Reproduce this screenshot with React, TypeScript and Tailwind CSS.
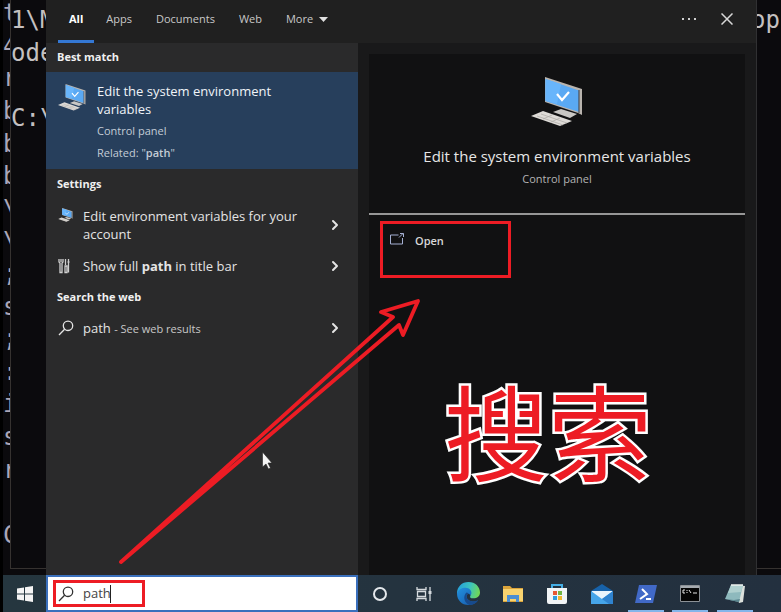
import React from "react";
import { ChevronRight } from "lucide-react";

const ink = "#ed1c24";

function ComputerIcon({ className }: { className: string }) {
  return (
    <svg viewBox="0 0 52 50" className={className} aria-hidden="true">
      <path d="M14 0 51 12V38L47 36 14 25Z" fill="#b9b4ae" />
      <path d="M14.500 2 48 13.500V35L14.500 24Z" fill="#5aa9f3" />
      <path d="M14.500 2 30 7 26 27 14.500 24Z" fill="#68b5fb" />
      <path d="M48 13v23" stroke="#4a4c50" strokeWidth="1.200" />
      <path d="m26 17 5 6 7-8" fill="none" stroke="#fff" strokeWidth="2.200" />
      <path d="m22 35 8-3 16 5-7 4Z" fill="#c9c7c4" />
      <path d="m0 39 12-5 29 10-12 5Z" fill="#dedbd7" />
      <path d="m6 39 26 9M10 37l26 9M12 42l9-4m-1 7 9-4" stroke="#aaa7a3" strokeWidth=".7" />
    </svg>
  );
}

function SearchIcon({ className }: { className: string }) {
  return (
    <svg viewBox="0 0 16 16" className={className} fill="none" stroke="currentColor" strokeWidth="1.300" aria-hidden="true">
      <circle cx="10" cy="5.800" r="4.700" />
      <path d="M6.600 9.200 1 15" />
    </svg>
  );
}

function ToolsIcon() {
  return (
    <svg viewBox="0 0 12 16" className="h-4 w-3" fill="none" stroke="#d0d0d0" strokeWidth="1.300" aria-hidden="true">
      <path d="M1 1v3l1 1v9.500h2V5l1-1V1M3 1v3M7.500 1v6M7 8h2v6.500H7ZM10.500 1v3M9.500 4h2M10.500 4v10.500" />
    </svg>
  );
}

function Heading({ children, className }: { children: React.ReactNode; className: string }) {
  return <h2 className={`flex items-center pl-[11px] text-[11px] font-bold text-[#f0f0f0] ${className}`}>{children}</h2>;
}

function ResultRow({ icon, children, className }: { icon: React.ReactNode; children: React.ReactNode; className: string }) {
  return (
    <button className={`flex w-full items-center pr-[15px] pl-3 text-left text-[13px] leading-[18px] text-[#e4e4e4] ${className}`}>
      <span className="flex w-[25px] shrink-0 self-start pt-2">{icon}</span>
      <span className="flex-1">{children}</span>
      <ChevronRight className="size-4 shrink-0" strokeWidth={3} />
    </button>
  );
}

const tabs = ["Apps", "Documents", "Web"];
const backLines = ["t", "4", "r", "b", "b", "b", "\\", "\\", ";", "s", ";", ":", "i", "s", "r", "", "C"];

function Header() {
  return (
    <header className="flex h-[43px] items-stretch bg-[#202020] pl-3 text-[11px] text-[#c8c8c8]">
      <nav className="flex flex-1">
        <button className="border-b-[3px] border-[#3478d4] px-[11px] pb-px font-bold text-white">All</button>
        {tabs.map((tab) => (
          <button key={tab} className="px-3 pb-1">{tab}</button>
        ))}
        <button className="flex items-center gap-1.5 px-3 pb-1">
          More
          <svg viewBox="0 0 9 5" className="h-[5px] w-[9px]" aria-hidden="true"><path d="M0 0h9L4.500 5Z" fill="#e0e0e0" /></svg>
        </button>
      </nav>
      <button aria-label="Options" className="w-9 pb-1.5">
        <svg viewBox="0 0 14 2" className="mx-auto h-0.5 w-3.5" fill="#d0d0d0" aria-hidden="true">
          <path d="M0 0h2v2H0zM6 0h2v2H6zM12 0h2v2h-2z" />
        </svg>
      </button>
      <button aria-label="Close" className="mr-[9px] w-10 pb-1.5">
        <svg viewBox="0 0 12 12" className="mx-auto size-3" stroke="#d8d8d8" strokeWidth="1.500" aria-hidden="true">
          <path d="m.5.5 11 11m0-11-11 11" />
        </svg>
      </button>
    </header>
  );
}

function Results() {
  return (
    <section className="w-[312px] shrink-0 bg-[#2a2a2b]">
      <Heading className="h-[29px]">Best match</Heading>
      <button className="flex h-[97px] w-full bg-[#273f5c] pt-2.5 pl-3 text-left">
        <ComputerIcon className="mt-0.5 h-[27px] w-7 shrink-0" />
        <span className="ml-[11px] block text-[11px] leading-[22px] text-[#c3ccd6]">
          <span className="mb-0.5 block max-w-[200px] text-[13px] leading-[18px] text-[#f0f4f8]">Edit the system environment variables</span>
          <span className="block">Control panel</span>
          <span className="block">Related: "<b className="font-semibold">path</b>"</span>
        </span>
      </button>
      <Heading className="h-[31px]">Settings</Heading>
      <ResultRow className="h-[50px]" icon={<ComputerIcon className="h-[14px] w-[15px]" />}>
        Edit environment variables for your account
      </ResultRow>
      <ResultRow className="h-8" icon={<ToolsIcon />}>
        Show full <b className="font-bold">path</b> in title bar
      </ResultRow>
      <Heading className="h-[30px]">Search the web</Heading>
      <ResultRow className="h-8" icon={<SearchIcon className="size-4" />}>
        path <span className="text-[11px] text-[#c8c8c8]">- See web results</span>
      </ResultRow>
    </section>
  );
}

function Preview() {
  return (
    <section className="flex flex-1 flex-col bg-[#19191a] px-[11px] pt-[11px]">
      <div className="flex-1 bg-[#111112]">
        <div className="flex h-[161px] flex-col items-center border-b-2 border-[#969696] pt-[23px]">
          <ComputerIcon className="h-[50px] w-[52px]" />
          <h1 className="mt-[17px] text-[15px] leading-6 text-[#e6e6e6]">Edit the system environment variables</h1>
          <p className="text-[11px] leading-[22px] text-[#b4b4b4]">Control panel</p>
        </div>
        <div className="relative mt-1.5 ml-[11px] h-[57px] w-[131px]">
          <button className="flex h-10 w-full items-center gap-[11px] pl-2.5 text-[11px] font-semibold text-[#d8d8d8]">
            <svg viewBox="0 0 14 12" className="mb-1 h-3 w-3.5" fill="none" stroke="#a5b0d2" aria-hidden="true">
              <path d="M8.500 2H.5v9h12V5M9 4.500 13 .5M10 .5h3.500V4" />
            </svg>
            Open
          </button>
          <span className="pointer-events-none absolute inset-0 border-[3px] border-[#ed1c24]" />
        </div>
        <p className="mt-[86px] ml-[75px] text-[104px] leading-[130px] font-normal whitespace-nowrap text-[#ed1c24] [font-family:'Noto_Sans_CJK_SC',sans-serif] [-webkit-text-stroke:5px_white] [paint-order:stroke_fill]">
          搜索
        </p>
      </div>
    </section>
  );
}

function EdgeIcon() {
  return (
    <svg viewBox="0 0 24 24" className="size-[23px]" aria-hidden="true">
      <defs>
        <linearGradient id="edgeTop" x1="0" y1=".3" x2="1" y2=".5"><stop stopColor="#249fdc" /><stop offset=".55" stopColor="#3cc3bd" /><stop offset="1" stopColor="#72d654" /></linearGradient>
        <linearGradient id="edgeLow" x1="0" y1="0" x2="1" y2="1"><stop stopColor="#2291df" /><stop offset="1" stopColor="#1757a8" /></linearGradient>
      </defs>
      <path d="M0 12C0 5 5 0 12 0s12 5 12 11c0 4-3 6-7 6-3 0-4-1-3-3 2-4-1-6-4-6-4 0-8 3-10 4Z" fill="url(#edgeTop)" />
      <path d="M0 12C1 8 5 6 9 6c4 0 6 3 6 5 0 1 0 2-1 3-1-2-4-2-4 1 0 4 6 7 12 4-2 3-6 5-10 5C5 24 0 19 0 12Z" fill="url(#edgeLow)" />
      <path d="M10 11c-4 3-3 11 3 13 4 0 7-2 9-5-6 3-12 0-12-4 0-2 1-3 3-2-1-1-2-2-3-2Z" fill="#174a8d" />
    </svg>
  );
}

const apps: { name: string; open?: boolean; icon: React.ReactNode }[] = [
  { name: "Cortana", icon: <svg viewBox="0 0 16 16" className="size-4"><circle cx="8" cy="8" r="6" fill="none" stroke="#e4e8ec" strokeWidth="2" /></svg> },
  { name: "Task View", icon: <svg viewBox="0 0 16 16" className="size-4" fill="none" stroke="#d5dade" strokeWidth="1.300"><path d="M1 1v2.500h9V1M1.500 5.500h8v5h-8ZM1 15v-2.500h9V15M14 1v14" /><path d="M12.500 5h3v3h-3z" fill="#d5dade" stroke="none" /></svg> },
  { name: "Edge", icon: <EdgeIcon /> },
  { name: "File Explorer", icon: <svg viewBox="0 0 20 17" className="h-[17px] w-5"><path d="M0 1h7l2 2h11v14H0z" fill="#dba43b" /><path d="M0 4h20v12H0z" fill="#f8d36f" /><path d="M4 17v-7h12v7h-3v-3H7v3z" fill="#4b8ed3" /></svg> },
  { name: "Store", icon: <svg viewBox="0 0 22 22" className="size-[22px]"><path d="M6 6V2h10v4" fill="none" stroke="#45aee5" strokeWidth="2" /><path d="M1 5h20v14q0 2-2 2H3q-2 0-2-2z" fill="#f1f4f6" /><path d="M7 8h4v4H7z" fill="#e65732" /><path d="M12 8h4v4h-4z" fill="#71b544" /><path d="M7 13h4v4H7z" fill="#319ddc" /><path d="M12 13h4v4h-4z" fill="#f2b72e" /></svg> },
  { name: "Mail", icon: <svg viewBox="0 0 22 20" className="h-5 w-[22px]"><path d="m0 7 11-7 11 7v4H0z" fill="#1762a9" /><path d="M1 7h20v8H1z" fill="#e9f4fc" /><path d="m0 7 11 8 11-8v13H0z" fill="#46a5e9" /><path d="m11 15 11-8v13H18z" fill="#2f83cf" /></svg> },
  { name: "PowerShell", open: true, icon: <svg viewBox="0 0 22 18" className="h-[18px] w-[22px]"><path d="M4 0h18l-4 18H0z" fill="#4169c7" /><path d="m7 4 5 5-7 5M11 14h5" fill="none" stroke="#fff" strokeWidth="2" /></svg> },
  { name: "Command Prompt", open: true, icon: <svg viewBox="0 0 20 17" className="h-[17px] w-5"><path d="M.5.500h19v16H.5z" fill="#050505" stroke="#8c9196" /><path d="M1 1h18v2H1z" fill="#a6abb0" /><path d="M5 5H3v3h2M7 5v1m0 1v1M9 5l2 3M13 8h4" fill="none" stroke="#e8e8e8" /></svg> },
  { name: "Notepad", open: true, icon: <svg viewBox="0 0 20 20" className="size-5"><path d="m7 1 13 1-2 16-4 1z" fill="#dce0dc" /><path d="M6 1h12l-4 17L0 15z" fill="#8eb9bd" /><path d="M6 1h12l-2 7L3 9z" fill="#b0d0cf" /><path d="m0 15 14 3 1-3-6 1z" fill="#5a858e" /><path d="M6 1h12" stroke="#eef2ef" strokeWidth="1.500" /></svg> },
];

function Taskbar() {
  return (
    <footer className="flex h-[37px] bg-linear-to-r from-[#25363f] to-[#23303f]">
      <button aria-label="Start" className="flex w-[43px] shrink-0 items-center justify-center">
        <svg viewBox="0 0 16 16" className="size-4" fill="#f4f4f4" aria-hidden="true">
          <path d="M0 2.500 7 1.500v6H0zM8 1.300 16 0v7.500H8zM0 8.500h7v6l-7-1zM8 8.500h8V16l-8-1.300z" />
        </svg>
      </button>
      <label className="relative flex w-[312px] shrink-0 items-center border-2 border-[#3a70bd] bg-white pl-2.5 text-[#333]">
        <SearchIcon className="size-4 shrink-0" />
        <input aria-label="Search" defaultValue="path" className="ml-[9px] w-full min-w-0 bg-transparent text-[13px] text-[#444] outline-none" />
        <span className="absolute top-2 left-[62px] h-[18px] w-px bg-[#222]" />
        <span className="pointer-events-none absolute top-[3px] left-[5px] h-[27px] w-[92px] border-[3px] border-[#ed1c24]" />
      </label>
      <nav className="mr-6 flex flex-1">
        {apps.map((app) => (
          <button key={app.name} aria-label={app.name} className="relative flex flex-1 items-center justify-center">
            {app.icon}
            {app.open && <span className="absolute bottom-0 h-0.5 w-9 bg-[#83b5ea]" />}
          </button>
        ))}
      </nav>
    </footer>
  );
}

export default function App() {
  return (
    <div className="relative flex min-h-screen flex-col overflow-hidden border-l-[3px] border-black bg-[#0b0a0d] font-['Open_Sans','Noto_Sans',sans-serif]">
      <main className="flex flex-1">
        <div className="-mt-[3px] flex w-[7px] shrink-0 flex-col overflow-hidden pb-6 font-['DejaVu_Sans_Mono',monospace] text-2xl text-[#aaa6b8]">
          {backLines.map((line, i) => (
            <span key={i} className="flex flex-1 items-center leading-8">{line}</span>
          ))}
        </div>
        <div className="mb-[6px] w-9 shrink-0 overflow-hidden border-b border-l border-[#363230] pt-1 font-['DejaVu_Sans_Mono',monospace] text-2xl leading-[33px] whitespace-pre text-[#c4c0c0]">
          <p>1\M</p>
          <p>ode</p>
          <p className="mt-8">C:\</p>
        </div>
        <div className="flex flex-1 flex-col border-r border-[#303032]">
          <Header />
          <div className="flex flex-1">
            <Results />
            <Preview />
          </div>
        </div>
        <div className="mb-[6px] w-6 shrink-0 overflow-hidden border-b border-[#363230] pt-1 font-['DejaVu_Sans_Mono',monospace] text-2xl leading-[33px] text-[#c4c0c0]">
          <p className="-ml-1.5 whitespace-pre">opl</p>
        </div>
      </main>
      <Taskbar />
      <svg viewBox="0 0 778 612" className="pointer-events-none absolute top-0 left-0 h-[612px] w-[778px]" aria-hidden="true">
        <path d="M118 562 390 317 378 312 415 301 400 335 396 325Z" fill="none" stroke={ink} strokeWidth="3.800" strokeLinejoin="round" />
        <path d="M259.500 452v15l3.500-3 2.500 5 2-1-2.500-5h4Z" fill="#f4f4f4" stroke="#222" strokeWidth=".6" />
      </svg>
    </div>
  );
}
